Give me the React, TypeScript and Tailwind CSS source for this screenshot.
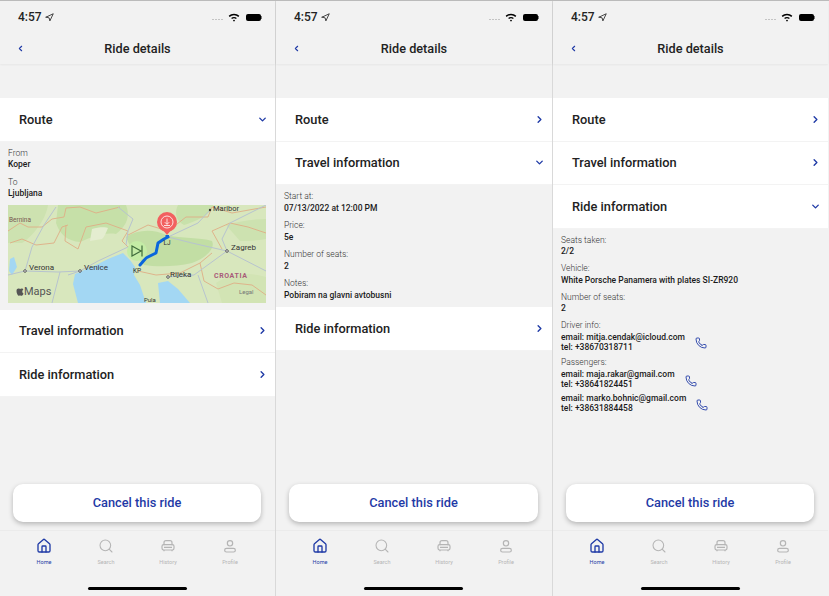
import type { ReactNode } from 'react'
import { ChevronDown, ChevronLeft, ChevronRight, House, Search, Phone, Navigation } from 'lucide-react'

type Field = { label: string; lines: string[]; phone?: boolean }

const ACCENT = 'text-[#1f3aa6]'

function Car({ className }: { className?: string }) {
  return (
    <svg viewBox="0 0 24 24" fill="none" stroke="currentColor" strokeWidth="1.8" className={className}>
      <path d="M6 11V7a3 3 0 0 1 3-3h6a3 3 0 0 1 3 3v4" />
      <rect x="3" y="10" width="18" height="8" rx="2.5" />
      <path d="M6 18v2M18 18v2M6 14h12" />
    </svg>
  )
}

function Person({ className }: { className?: string }) {
  return (
    <svg viewBox="0 0 24 24" fill="none" stroke="currentColor" strokeWidth="1.8" className={className}>
      <circle cx="12" cy="8" r="4" />
      <rect x="4" y="15.5" width="16" height="5.5" rx="2.75" />
    </svg>
  )
}

function StatusBar() {
  return (
    <div className="h-[33px] flex items-center justify-between pl-[18px] pr-[13px] pb-[1px]">
      <div className="flex items-center gap-[3px] text-[12px] leading-[16px] font-medium text-[#222]">
        4:57
        <Navigation size={9} strokeWidth={2.2} className="text-[#222]" />
      </div>
      <div className="flex items-center gap-[4px]">
        <div className="flex gap-[1px] mr-[1px] mt-[5px]">
          {[0, 1, 2, 3].map((i) => (
            <div key={i} className="w-[2px] h-[1px] bg-[#c4c4c4]" />
          ))}
        </div>
        <svg viewBox="0 0 16 12" className="w-[12px] h-[9px] text-black" fill="currentColor">
          <path d="M8 9a1.6 1.6 0 0 1 1.4.8L8 11.6 6.6 9.8A1.6 1.6 0 0 1 8 9z" />
          <path d="M8 5.2c1.5 0 2.8.6 3.8 1.5l-1.2 1.4A3.9 3.9 0 0 0 8 7a3.9 3.9 0 0 0-2.6 1.100L4.200 6.700C5.200 5.800 6.500 5.200 8 5.200z" />
          <path d="M8 1c2.700 0 5.200 1 7.100 2.800l-1.300 1.500A8.600 8.600 0 0 0 8 3a8.600 8.600 0 0 0-5.800 2.300L.9 3.800C2.800 2 5.300 1 8 1z" />
        </svg>
        <div className="flex items-center ml-[2px]">
          <div className="w-[15px] h-[7px] rounded-[2px] bg-black" />
          <div className="w-[1px] h-[3px] bg-[#777]" />
        </div>
      </div>
    </div>
  )
}

function Header() {
  return (
    <div className="bg-[#f2f2f2] shadow-[0_1px_2px_rgba(0,0,0,0.05)]">
      <StatusBar />
      <div className="h-[30px] relative flex items-center justify-center">
        <ChevronLeft size={9} strokeWidth={3} className={`absolute left-[16px] top-[10px] ${ACCENT}`} />
        <span className="text-[12.7px] font-medium text-[#222]">Ride details</span>
      </div>
    </div>
  )
}

function Row({ title, open }: { title: string; open?: boolean }) {
  return (
    <div className="h-[43.5px] bg-white flex items-center justify-between pl-[19px] pr-[7px] border-b border-[#f3f3f3]">
      <span className="text-[12.8px] font-medium text-[#222]">{title}</span>
      {open ? (
        <ChevronDown size={11} strokeWidth={3} className={ACCENT} />
      ) : (
        <ChevronRight size={11} strokeWidth={3} className={ACCENT} />
      )}
    </div>
  )
}

function Fields({ fields, tight }: { fields: Field[]; tight?: boolean }) {
  return (
    <div className={`flex flex-col ${tight ? 'gap-[5.5px]' : 'gap-[6px]'}`}>
      {fields.map((f, i) => (
        <div key={i} className="text-[8.5px] leading-[11.5px]">
          {f.label && <div className="font-light text-[#333]">{f.label}</div>}
          <div className="flex items-center">
            <div className={`font-medium text-[#1b1b1b] ${f.phone ? 'leading-[10.2px]' : ''}`}>
              {f.lines.map((l) => (
                <div key={l}>{l}</div>
              ))}
            </div>
            {f.phone && <Phone size={12} strokeWidth={1.8} className={`${ACCENT} ml-[10px] mt-[3px]`} />}
          </div>
        </div>
      ))}
    </div>
  )
}

function RouteMap() {
  return (
    <svg viewBox="0 0 258 98" className="w-[258px] h-[98px] block">
      <rect width="258" height="98" fill="#d8e7bd" />
      {/* green patches */}
      <path d="M50 0 H118 C122 10 120 20 108 29 C96 27 84 32 72 37 C60 36 52 30 48 18z" fill="#c6e0a8" />
      <path d="M0 0 H40 C38 14 26 30 14 38 L0 38z" fill="#cde2b0" />
      <path d="M118 32 C130 24 146 24 158 30 C174 34 192 32 204 36 C208 44 196 54 184 58 C168 62 148 62 136 60 C128 52 122 42 118 32z" fill="#c2dea4" />
      <path d="M170 0 H205 C204 8 190 16 176 20 C168 16 166 8 170 0z" fill="#c8e1ab" />
      <path d="M218 20 C232 16 246 14 258 14 V34 C248 36 238 36 232 36z" fill="#cde2b0" />
      <path d="M208 78 C220 70 240 66 258 72 V98 H214z" fill="#d2e4b4" />
      <path d="M84 24 C90 22 98 22 100 23 C98 28 96 32 94 34 L82 36z" fill="#e4edd0" />
      {/* water */}
      <path d="M115 48 L122 55 L127 62 L126 70 L132 80 L138 98 H70 L65 79 L67 69 L90 59 L100 54z" fill="#a3d7f3" />
      <path d="M150 78 L160 76 L170 84 L182 98 H152z" fill="#a3d7f3" />
      <path d="M2 54 L6 52 L9 62 L4 70 L1 66z" fill="#a3d7f3" />
      {/* borders */}
      <g fill="none" stroke="#dfae86" strokeWidth="0.9" strokeLinejoin="round">
        <path d="M0 26 L12 18 L20 22 L34 22 L44 14 L56 12 L58 3 L72 2 L88 8 L112 2" />
        <path d="M2 38 L14 34 L28 40 L46 38 L54 22 L60 20" />
        <path d="M58 20 L57 36 L70 44 L78 22 L98 18 L120 26 L114 36 L120 42" />
        <path d="M120 30 L140 20 L160 26 L178 12 L200 12 L204 2 L224 8 L258 2" />
        <path d="M214 44 L204 26 L222 18 L240 22 L258 28" />
        <path d="M130 66 L148 70 L172 68 L192 58 L204 48" />
        <path d="M192 58 L196 76 L210 84 L226 78 L244 80 L258 90" />
      </g>
      {/* roads */}
      <g fill="none" stroke="#b7c3cf" strokeWidth="1" strokeLinejoin="round">
        <path d="M0 70 L17 66 L50 67 L72 66 L90 56 L120 42 L128 38" />
        <path d="M17 66 L24 42 L36 20 L48 2" />
        <path d="M52 67 L44 98" />
        <path d="M72 66 L60 70" />
        <path d="M110 2 L125 14 L120 26 L118 40" />
        <path d="M160 32 L184 38 L219 46 L258 66" />
        <path d="M160 32 L190 18 L202 5" />
        <path d="M219 46 L214 34 L222 18 L258 0" />
        <path d="M160 72 L186 70 L219 46" />
        <path d="M190 70 L200 98" />
      </g>
      {/* route */}
      <path d="M132 60 L138 53 L148 48 L150 38 L156 34 L160 32" fill="none" stroke="#0a66dc" strokeWidth="3" strokeLinecap="round" strokeLinejoin="round" />
      {/* start marker */}
      <circle cx="129" cy="46" r="10" fill="#c4eca6" />
      <path d="M124 41 L133 46 L124 51z M134 40.500 V51.500" fill="none" stroke="#3e6b3b" strokeWidth="1.200" />
      {/* end marker */}
      <circle cx="159" cy="17" r="10" fill="#f2605f" />
      <path d="M154 24 L159 30 L164 24z" fill="#f2605f" />
      <rect x="157.500" y="30" width="3.500" height="3" fill="#0a66dc" />
      <circle cx="159" cy="17" r="6" fill="none" stroke="#fff" strokeWidth="0.800" />
      <path d="M159 13.500 V19 M156.800 17.200 L159 19.400 L161.200 17.200 M156 20.500 H162" fill="none" stroke="#fff" strokeWidth="0.800" />
      {/* labels */}
      <g fontFamily="Roboto, sans-serif" fontSize="8" fill="#333">
        <text x="155.500" y="40" fontSize="6.500">LJ</text>
        <text x="125" y="68" fontSize="6.500">KP</text>
        <text x="205" y="6" fontSize="7.500">Maribor</text>
        <text x="223" y="45">Zagreb</text>
        <text x="21" y="65">Verona</text>
        <text x="76" y="65">Venice</text>
        <text x="162" y="72">Rijeka</text>
        <text x="136" y="96.500" fontSize="6">Pula</text>
        <text x="1" y="17" fontSize="6.500" fill="#7a5a50">Bernina</text>
        <text x="206" y="73" fontSize="7" fontWeight="700" letterSpacing="0.600" fill="#a85a78">CROATIA</text>
        <text x="231" y="89" fontSize="6" fill="#777">Legal</text>
      </g>
      <circle cx="17" cy="66" r="1.300" fill="#fff" stroke="#333" strokeWidth="0.800" />
      <circle cx="72" cy="66" r="1.300" fill="#fff" stroke="#333" strokeWidth="0.800" />
      <circle cx="160" cy="72" r="1.300" fill="#fff" stroke="#333" strokeWidth="0.800" />
      <circle cx="219" cy="46" r="1.300" fill="#fff" stroke="#333" strokeWidth="0.800" />
      <circle cx="202" cy="5" r="1.200" fill="#333" />
      <path d="M8.500 86 C8.500 83.500 10.500 83 12 84 C13.500 83 15 83.500 15.300 84.500 C13.800 85.500 14 88 15.500 88.500 C15 90 14 91 13 90.800 C12.300 90.500 11.700 90.500 11 90.800 C10 91 8.500 88.500 8.500 86z" fill="#555" />
      <text x="16" y="90" fontFamily="Roboto, sans-serif" fontSize="11" fill="#555">Maps</text>
    </svg>
  )
}

function Tab({ label, active, children }: { label: string; active?: boolean; children: ReactNode }) {
  return (
    <div className={`w-[62px] flex flex-col items-center ${active ? ACCENT : 'text-[#b5b5b5]'}`}>
      {children}
      <span className="text-[5.5px] leading-[8px] mt-[4px]">{label}</span>
    </div>
  )
}

function Screen({ className, children }: { className: string; children: ReactNode }) {
  return (
    <div className={`h-full flex flex-col bg-[#f2f2f2] border-r border-[#d9d9d9] last:border-r-transparent ${className}`}>
      <Header />
      <div className="flex-1 pt-[34px]">{children}</div>
      <div className="pl-[13px] pr-[14px] pb-[8px]">
        <div className="h-[38px] bg-white rounded-[10px] shadow-[0_2px_5px_rgba(0,0,0,0.25)] flex items-center justify-center text-[12.8px] font-medium text-[#1f3aa6]">
          Cancel this ride
        </div>
      </div>
      <div className="h-[66px] border-t border-[#ebebeb] relative">
        <div className="flex px-[13px] pt-[7px]">
          <Tab label="Home" active>
            <House size={16} strokeWidth={2} />
          </Tab>
          <Tab label="Search">
            <Search size={16} strokeWidth={1.6} />
          </Tab>
          <Tab label="History">
            <Car className="w-[16px] h-[16px]" />
          </Tab>
          <Tab label="Profile">
            <Person className="w-[16px] h-[16px]" />
          </Tab>
        </div>
        <div className="absolute left-[88px] bottom-[6px] w-[99px] h-[3px] rounded-full bg-black" />
      </div>
    </div>
  )
}

export default function App() {
  return (
    <div className="w-[829px] h-[596px] overflow-hidden flex border-t border-[#bbb] font-['Roboto',sans-serif]">
      <Screen className="w-[276px]">
        <Row title="Route" open />
        <div className="px-[8px] pt-[6px] pb-[7px]">
          <Fields
            fields={[
              { label: 'From', lines: ['Koper'] },
              { label: 'To', lines: ['Ljubljana'] },
            ]}
          />
          <div className="mt-[5px]">
            <RouteMap />
          </div>
        </div>
        <Row title="Travel information" />
        <Row title="Ride information" />
      </Screen>
      <Screen className="w-[277px]">
        <Row title="Route" />
        <Row title="Travel information" open />
        <div className="px-[8px] pt-[6px] pb-[6px]">
          <Fields
            fields={[
              { label: 'Start at:', lines: ['07/13/2022 at 12:00 PM'] },
              { label: 'Price:', lines: ['5e'] },
              { label: 'Number of seats:', lines: ['2'] },
              { label: 'Notes:', lines: ['Pobiram na glavni avtobusni'] },
            ]}
          />
        </div>
        <Row title="Ride information" />
      </Screen>
      <Screen className="w-[276px]">
        <Row title="Route" />
        <Row title="Travel information" />
        <Row title="Ride information" open />
        <div className="px-[8px] pt-[6px]">
          <Fields
            tight
            fields={[
              { label: 'Seats taken:', lines: ['2/2'] },
              { label: 'Vehicle:', lines: ['White Porsche Panamera with plates SI-ZR920'] },
              { label: 'Number of seats:', lines: ['2'] },
              { label: 'Driver info:', lines: ['email: mitja.cendak@icloud.com', 'tel: +38670318711'], phone: true },
              { label: 'Passengers:', lines: ['email: maja.rakar@gmail.com', 'tel: +38641824451'], phone: true },
            ]}
          />
          <div className="mt-[3.8px]">
            <Fields fields={[{ label: '', lines: ['email: marko.bohnic@gmail.com', 'tel: +38631884458'], phone: true }]} />
          </div>
        </div>
      </Screen>
    </div>
  )
}
